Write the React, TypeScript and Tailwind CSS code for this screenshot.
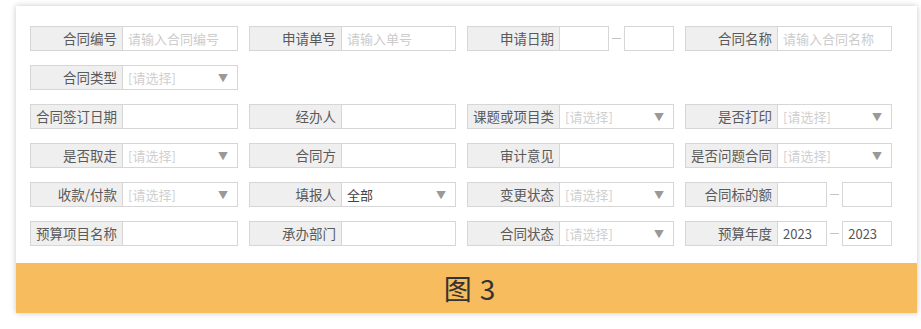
import React from 'react';

type Field =
  | { kind: 'text'; label: string; placeholder?: string; value?: string }
  | { kind: 'select'; label: string; value?: string }
  | { kind: 'range'; label: string; from?: string; to?: string }
  | { kind: 'empty' };

const rows: Field[][] = [
  [
    { kind: 'text', label: '合同编号', placeholder: '请输入合同编号' },
    { kind: 'text', label: '申请单号', placeholder: '请输入单号' },
    { kind: 'range', label: '申请日期' },
    { kind: 'text', label: '合同名称', placeholder: '请输入合同名称' },
  ],
  [{ kind: 'select', label: '合同类型' }, { kind: 'empty' }, { kind: 'empty' }, { kind: 'empty' }],
  [
    { kind: 'text', label: '合同签订日期' },
    { kind: 'text', label: '经办人' },
    { kind: 'select', label: '课题或项目类' },
    { kind: 'select', label: '是否打印' },
  ],
  [
    { kind: 'select', label: '是否取走' },
    { kind: 'text', label: '合同方' },
    { kind: 'text', label: '审计意见' },
    { kind: 'select', label: '是否问题合同' },
  ],
  [
    { kind: 'select', label: '收款/付款' },
    { kind: 'select', label: '填报人', value: '全部' },
    { kind: 'select', label: '变更状态' },
    { kind: 'range', label: '合同标的额' },
  ],
  [
    { kind: 'text', label: '预算项目名称' },
    { kind: 'text', label: '承办部门' },
    { kind: 'select', label: '合同状态' },
    { kind: 'range', label: '预算年度', from: '2023', to: '2023' },
  ],
];

const font = { fontFamily: '"Noto Sans CJK SC", "Noto Sans", sans-serif' };

function Label({ text }: { text: string }) {
  return (
    <div className="w-[92px] shrink-0 h-full bg-[#efefef] border-r border-[#d6d6d6] flex items-center justify-end pr-[5px] text-[13.5px] text-[#5a5a5a] whitespace-nowrap">
      {text}
    </div>
  );
}

function FieldBox({ field }: { field: Field }) {
  if (field.kind === 'empty') return <div className="h-[25px]" />;

  if (field.kind === 'range') {
    return (
      <div className="flex items-center h-[25px]">
        <div className="flex h-full border border-[#d6d6d6] w-[143px]">
          <Label text={field.label} />
          <div className="flex-1 bg-white flex items-center pl-[5px] text-[13px] text-[#555]">{field.from}</div>
        </div>
        <div className="w-[15px] flex items-center justify-center">
          <div className="w-[9px] h-px bg-[#c4c4c4]" />
        </div>
        <div className="w-[50px] h-full border border-[#d6d6d6] bg-white flex items-center pl-[5px] text-[13px] text-[#555]">
          {field.to}
        </div>
      </div>
    );
  }

  return (
    <div className="flex h-[25px] border border-[#d6d6d6]">
      <Label text={field.label} />
      <div className="flex-1 bg-white flex items-center pl-[5px] pr-[9px] text-[13px]">
        {field.kind === 'text' && (
          <span className="text-[#ccc] whitespace-nowrap">{field.placeholder ?? field.value}</span>
        )}
        {field.kind === 'select' && (
          <>
            <span className={field.value ? 'text-[#444]' : 'text-[#cfcfcf]'}>{field.value ?? '[请选择]'}</span>
            <span className="ml-auto text-[10px] text-[#999]">▼</span>
          </>
        )}
      </div>
    </div>
  );
}

export default function App() {
  return (
    <div className="w-[921px] h-[329px] bg-white pt-[6px] pl-[16px]" style={font}>
      <div className="w-[901px] shadow-[0_0_6px_rgba(0,0,0,0.22)]">
        <div className="bg-white pl-[14px] pt-[20px] pb-[17px]">
          <div className="grid grid-cols-[208px_207px_207px_207px] gap-x-[11px] gap-y-[14px]">
            {rows.flat().map((f, i) => (
              <FieldBox key={i} field={f} />
            ))}
          </div>
        </div>
        <div className="h-[50px] bg-[#f6bc5e] flex items-center justify-center gap-[8px] text-[28px] text-[#333] pl-[6px]">
          <span>图</span>
          <span>3</span>
        </div>
      </div>
    </div>
  );
}
